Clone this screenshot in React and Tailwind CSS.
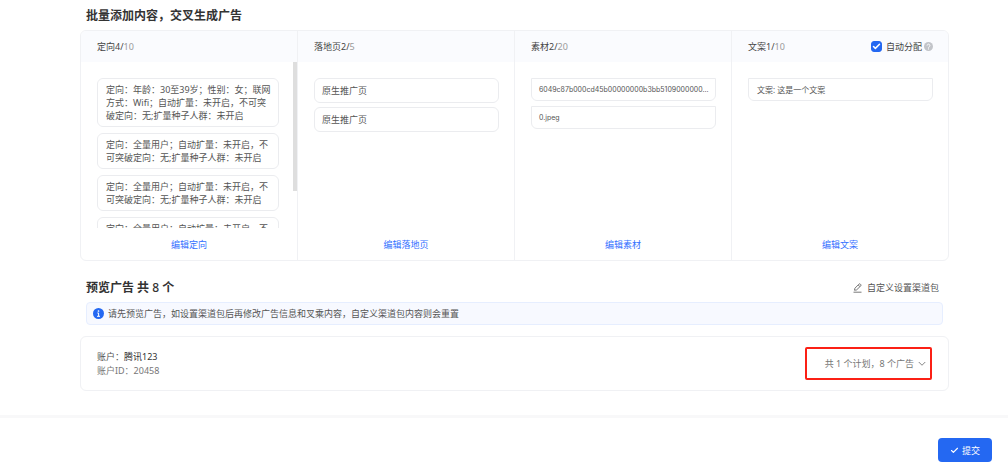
import React from 'react';
import { Check } from 'lucide-react';

const targets = [
  '定向：年龄：30至39岁；性别：女；联网方式：Wifi；自动扩量：未开启，不可突破定向：无;扩量种子人群：未开启',
  '定向：全量用户；自动扩量：未开启，不可突破定向：无;扩量种子人群：未开启',
  '定向：全量用户；自动扩量：未开启，不可突破定向：无;扩量种子人群：未开启',
  '定向：全量用户；自动扩量：未开启，不可突破定向：无;扩量种子人群：未开启',
];

const Column = ({ title, count, max, editText, extra, scroll, children }) => {
  return (
    <section className="flex-1 min-w-0 flex flex-col border-r border-[#f0f1f4] last:border-r-0">
      {/* Header */}
      <div className="h-[31px] pl-4 pr-[15px] flex items-center justify-between bg-[#fafbfe]">
        <h3 className="text-[#444]">
          {title}{count}/<span className="text-[#999]">{max}</span>
        </h3>
        {extra}
      </div>

      {/* List */}
      <div className="relative pt-4">
        <div className={`h-[150px] overflow-hidden pl-4 ${scroll ? 'pr-[18px]' : 'pr-[15px]'}`}>
          {children}
        </div>
        {scroll && <div className="absolute right-0 top-0 w-1 h-[129px] bg-[#dedede]" />}
      </div>

      <button type="button" className="h-8 text-[#3370ff]">{editText}</button>
    </section>
  );
};

const InfoIcon = () => (
  <svg className="w-[11px] h-[11px] shrink-0" viewBox="0 0 22 22" aria-hidden="true">
    <circle cx="11" cy="11" r="11" fill="#2468f2" />
    <circle cx="11" cy="6" r="1.7" fill="#fff" />
    <path d="M8.6 10h2.6v6.4M8 16.6h6" stroke="#fff" strokeWidth="2" fill="none" />
  </svg>
);

const HelpIcon = () => (
  <svg className="w-[9px] h-[9px] shrink-0" viewBox="0 0 18 18" aria-hidden="true">
    <circle cx="9" cy="9" r="9" fill="#c2c4c9" />
    <path d="M6.2 7.2a2.8 2.8 0 1 1 4.4 2.2c-1 .7-1.6 1-1.6 2.1" stroke="#fff" strokeWidth="1.8" fill="none" />
    <circle cx="9" cy="13.8" r="1.1" fill="#fff" />
  </svg>
);

const EditIcon = () => (
  <svg className="w-[9px] h-[10px] shrink-0" viewBox="0 0 18 20" fill="none" stroke="#555" strokeWidth="1.6" aria-hidden="true">
    <path d="M3 14.5l.8-4L12 2.2a1.8 1.8 0 0 1 2.6 0l.9.9a1.8 1.8 0 0 1 0 2.6L7.2 13.8z" />
    <path d="M10.5 4l3.4 3.4M1 18.4h16" />
  </svg>
);

const ArrowIcon = () => (
  <svg className="w-2 h-2 shrink-0" viewBox="0 0 16 16" fill="none" stroke="#777" strokeWidth="1.8" aria-hidden="true">
    <path d="M1.5 4l6.5 6.5L14.5 4" />
  </svg>
);

const App = () => {
  return (
    <div
      lang="zh-CN"
      className="bg-white text-[#555] text-[9px] leading-[13px] font-['Noto_Sans','Noto_Sans_CJK_SC',sans-serif]"
    >
      <main className="pl-20 pr-[59px] pt-2">
        <h2 className="px-[6px] text-xs font-bold text-[#333]">批量添加内容，交叉生成广告</h2>

        <div className="mt-[6px] flex border border-[#f0f1f4] rounded-md overflow-hidden">
          <Column title="定向" count={4} max={10} editText="编辑定向" scroll>
            <ul className="flex flex-col gap-[6px]">
              {targets.map((text, i) => (
                <li key={i} className="pl-2 pr-1 py-1 border border-[#ebecef] rounded-md">{text}</li>
              ))}
            </ul>
          </Column>

          <Column title="落地页" count={2} max={5} editText="编辑落地页">
            <ul className="flex flex-col gap-1">
              <li className="px-[7px] py-[5px] border border-[#ebecef] rounded-md">原生推广页</li>
              <li className="px-[7px] py-[5px] border border-[#ebecef] rounded-md">原生推广页</li>
            </ul>
          </Column>

          <Column title="素材" count={2} max={20} editText="编辑素材">
            <ul className="flex flex-col gap-[5px] text-[7px] font-['Inter','Noto_Sans_CJK_SC',sans-serif]">
              <li className="px-[7px] py-1 border border-[#ebecef] rounded-b-md whitespace-nowrap">
                6049c87b000cd45b00000000b3bb5109000000...
              </li>
              <li className="px-[7px] py-1 border border-[#ebecef] rounded-b-md">0.jpeg</li>
            </ul>
          </Column>

          <Column
            title="文案"
            count={1}
            max={10}
            editText="编辑文案"
            extra={
              <div className="flex items-center gap-[2px]">
                <label className="flex items-center gap-1 text-[#444]">
                  <span className="relative w-[11px] h-[11px]">
                    <input
                      type="checkbox"
                      defaultChecked
                      className="peer block appearance-none w-[11px] h-[11px] rounded-[3px] border border-[#2468f2] checked:bg-[#2468f2]"
                    />
                    <Check
                      size={9}
                      strokeWidth={4}
                      className="absolute left-px top-px text-white pointer-events-none hidden peer-checked:block"
                    />
                  </span>
                  自动分配
                </label>
                <HelpIcon />
              </div>
            }
          >
            <ul className="text-[8px]">
              <li className="px-2 py-1 border border-[#ebecef] rounded-b-md">文案: 这是一个文案</li>
            </ul>
          </Column>
        </div>

        {/* Preview */}
        <div className="mt-3 h-[29px] pl-[6px] pr-[10px] flex items-center justify-between">
          <h2 className="text-xs font-bold text-[#333]">
            预览广告 共 <span className="font-medium">8</span> 个
          </h2>
          <button type="button" className="flex items-center gap-[5px]">
            <EditIcon />
            自定义设置渠道包
          </button>
        </div>

        <div className="mx-[6px] px-[6px] py-1 flex items-center gap-1 bg-[#f7f9ff] border border-[#e6eeff] rounded-sm">
          <InfoIcon />
          <p>请先预览广告，如设置渠道包后再修改广告信息和叉乘内容，自定义渠道包内容则会重置</p>
        </div>

        <div className="mt-[11px] px-4 flex items-center justify-between border border-[#f0f1f4] rounded-md">
          <div className="pt-[13px] pb-3 leading-[14px]">
            <p>账户：<span className="text-[#333]">腾讯123</span></p>
            <p className="text-[#777]">账户ID：20458</p>
          </div>
          <button
            type="button"
            className="h-[33px] pl-[18px] pr-1 flex items-center gap-1 border-2 border-[#fb2015] rounded-xs text-[#777]"
          >
            共 1 个计划，8 个广告
            <ArrowIcon />
          </button>
        </div>
      </main>

      <footer className="mt-6 pt-5 pb-2 pr-4 flex justify-end border-t-3 border-[#f8f8f9]">
        <button type="submit" className="h-6 px-3 flex items-center gap-[3px] rounded-sm bg-[#2468f2] text-white">
          <Check size={9} strokeWidth={3} />
          提交
        </button>
      </footer>
    </div>
  );
};

export default App;
